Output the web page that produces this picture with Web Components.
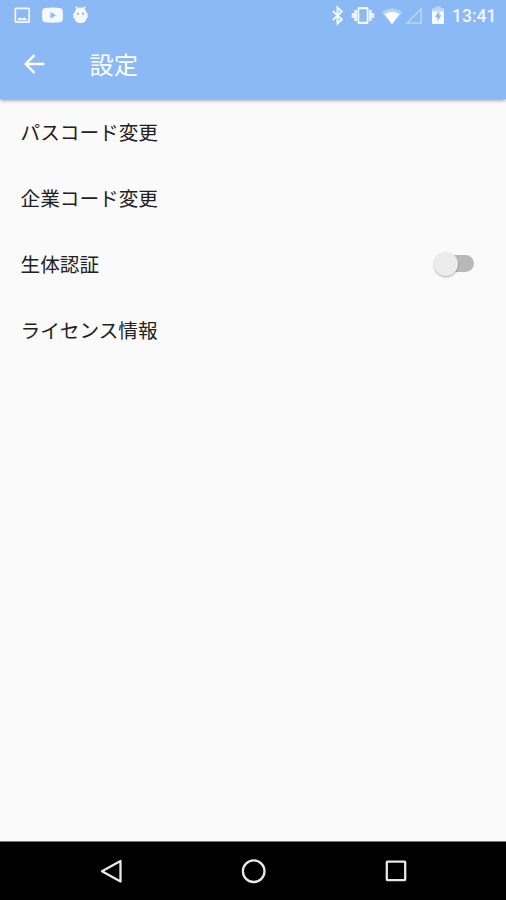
<!DOCTYPE html>
<html lang="ja">
<head>
<meta charset="utf-8">
<meta name="viewport" content="width=device-width, initial-scale=1">
<title>設定</title>
<style>
  html, body {
    margin: 0;
    height: 100%;
    overflow: hidden;
    background: #fafafa;
    font-family: Roboto, "Noto Sans CJK JP", sans-serif;
  }
</style>
</head>
<body>
<settings-screen></settings-screen>
<script>
class StatusBar extends HTMLElement {
  constructor() {
    super();
    this.attachShadow({ mode: "open" }).innerHTML = `
    <style>
      :host {
        display: flex;
        align-items: center;
        box-sizing: border-box;
        height: 32px;
        padding: 0 10px 0 13px;
        color: #fff;
      }
      svg {
        display: block;
        flex: none;
        fill: currentColor;
      }
      .left, .right {
        display: flex;
        align-items: center;
      }
      .left { gap: 9.5px; opacity: .92; }
      .right { margin-left: auto; }
      time {
        margin-left: 7px;
        width: 44px;
        font-size: 17.5px;
        font-weight: 500;
        line-height: 32px;
        white-space: nowrap;
        opacity: .88;
      }
    </style>
    <div class="left">
      <svg width="19" height="32" viewBox="0 0 19 32">
        <path fill-rule="evenodd" d="M3 7.500h12.500a1.500 1.500 0 0 1 1.500 1.500v12.500a1.500 1.500 0 0 1-1.500 1.500h-12.500a1.500 1.500 0 0 1-1.500-1.500v-12.500a1.500 1.500 0 0 1 1.500-1.500zM3.200 9.200v12.100h12.100v-12.100zM4 20.300l2.800-3.300 2 1.800 2.700-1.600 3.300 3.100z"/>
      </svg>
      <svg width="21" height="32" viewBox="0 0 21 32">
        <path fill-rule="evenodd" d="M3.500 8Q10.500 7.200 17.500 8Q20.500 8 20.700 11Q21.100 15.200 20.700 19.500Q20.500 22 17.500 22.300Q10.500 23 3.500 22.300Q.5 22 .3 19.500Q-.1 15.200 .3 11Q.5 8 3.500 8zM8.500 12v6.600l5.500-3.300z"/>
      </svg>
      <svg width="17" height="32" viewBox="0 0 17 32">
        <path fill-rule="evenodd" d="M3.200 6.900l1.200-.7 1.400 1.600q2.700-.8 5.400 0l1.400-1.600 1.200.7-1.300 2q2 1.400 2 4.100h1.200v5h-1.200q-.2 5-6 5t-6-5h-1.200v-5h1.200q0-2.700 2-4.100zM5 12.800v2h2v-2zM10 12.800v2h2v-2z"/>
      </svg>
    </div>
    <div class="right">
      <svg width="14" height="32" viewBox="0 0 14 32">
        <path d="M1.800 11l9 8.500-4.300 4V7.500l4.300 4-9 8.500" fill="none" stroke="#fff" stroke-width="1.900" opacity=".92"/>
      </svg>
      <svg width="24" height="32" viewBox="0 0 24 32" style="margin-left:6px">
        <path fill-rule="evenodd" d="M8 7h8q1.500 0 1.500 1.500v14q0 1.500-1.500 1.500h-8q-1.500 0-1.500-1.500v-14q0-1.500 1.500-1.500zM8.300 9.200v12.600h7.400v-12.600z" opacity=".9"/>
        <path d="M3.300 10h2.700v11h-2.700zM.8 13h2.500v5h-2.500zM18 10h2.700v11h-2.700zM20.700 13h2.500v5h-2.500z" opacity=".82"/>
      </svg>
      <svg width="22" height="32" viewBox="0 0 22 32" style="margin-left:6px">
        <path d="M.8 12Q11 4.500 21.200 12L11 24.200z" opacity=".35"/>
        <path d="M3.500 14.300Q11 9 18.500 14.300L11 24.200z"/>
      </svg>
      <svg width="18" height="32" viewBox="0 0 18 32" style="margin-left:2px">
        <path d="M1.800 23.200L16.200 8.800V23.200z" fill="none" stroke="#fff" stroke-width="1.300" opacity=".45"/>
      </svg>
      <svg width="14" height="32" viewBox="0 0 14 32" style="margin-left:8px">
        <path d="M4.500 6.500h5v1.700h2.500q1 0 1 1V12H1V9.200q0-1 1-1h2.500z" opacity=".45"/>
        <path fill-rule="evenodd" d="M1 11.500h12v11.500q0 1-1 1h-10q-1 0-1-1zM8.300 10.500L4 17h2.500v4.500L10.300 15.200h-2z" opacity=".92"/>
      </svg>
      <time>13:41</time>
    </div>
    `;
  }
}
customElements.define("status-bar", StatusBar);

class AppBar extends HTMLElement {
  constructor() {
    super();
    this.attachShadow({ mode: "open" }).innerHTML = `
    <style>
      :host {
        display: flex;
        align-items: center;
        box-sizing: border-box;
        height: 67px;
        padding: 0 22px 0 23px;
        color: #fff;
      }
      svg { display: block; margin-top: -3px; }
      h1 {
        margin: 1px 0 0 43.5px;
        font-size: 24.3px;
        font-weight: 400;
        line-height: 36px;
      }
    </style>
    <svg width="23" height="22" viewBox="0 0 23 22">
      <path d="M21.400 11H3.500M11.500 2.200L2.700 11l8.800 8.800" fill="none" stroke="#fff" stroke-width="2.400"/>
    </svg>
    <h1><slot></slot></h1>
    `;
  }
}
customElements.define("app-bar", AppBar);

class SettingsItem extends HTMLElement {
  constructor() {
    super();
    this.attachShadow({ mode: "open" }).innerHTML = `
    <style>
      :host {
        display: flex;
        align-items: center;
        justify-content: space-between;
        box-sizing: border-box;
        height: 66px;
        padding: 0 32px 0 20.5px;
        color: #212121;
        font-size: 19.65px;
        line-height: 30px;
      }
      span { padding-top: 4px; }
    </style>
    <span><slot></slot></span>
    <slot name="action"></slot>
    `;
  }
}
customElements.define("settings-item", SettingsItem);

class ToggleSwitch extends HTMLElement {
  constructor() {
    super();
    this.attachShadow({ mode: "open" }).innerHTML = `
    <style>
      :host {
        display: flex;
        align-items: center;
        width: 38px;
        height: 17px;
        margin-top: -1px;
        border-radius: 9px;
        background: #b9b9b9;
      }
      .thumb {
        flex: none;
        width: 24px;
        height: 24px;
        margin-left: -2.5px;
        border-radius: 50%;
        background: #ececec;
        box-shadow: 0 1px 2px rgba(0, 0, 0, .3);
      }
    </style>
    <div class="thumb"></div>
    `;
  }
}
customElements.define("toggle-switch", ToggleSwitch);

class NavigationBar extends HTMLElement {
  constructor() {
    super();
    this.attachShadow({ mode: "open" }).innerHTML = `
    <style>
      :host {
        display: flex;
        align-items: center;
        justify-content: center;
        gap: 114px;
        box-sizing: border-box;
        height: 59px;
        border-top: 1px solid #777;
        background: #000;
      }
      svg {
        display: block;
        fill: none;
        stroke: #e8e8e8;
        stroke-width: 2.3;
      }
    </style>
    <svg width="28" height="28" viewBox="0 0 28 28"><path d="M23.500 4v20.500L5 14.200z" stroke-linejoin="round"/></svg>
    <svg width="28" height="28" viewBox="0 0 28 28"><circle cx="14.700" cy="14.200" r="10.800"/></svg>
    <svg width="28" height="28" viewBox="0 0 28 28"><rect x="5.800" y="4.700" width="18.400" height="18.400" rx=".5"/></svg>
    `;
  }
}
customElements.define("navigation-bar", NavigationBar);

class SettingsScreen extends HTMLElement {
  constructor() {
    super();
    this.attachShadow({ mode: "open" }).innerHTML = `
    <style>
      :host {
        display: flex;
        flex-direction: column;
        height: 100vh;
        background: #fafafa;
      }
      header {
        flex: none;
        background: #8bb9f5;
        box-shadow: 0 1px 4px rgba(0, 0, 0, .45);
      }
      main { flex: 1; }
    </style>
    <header>
      <status-bar></status-bar>
      <app-bar>設定</app-bar>
    </header>
    <main>
      <settings-item>パスコード変更</settings-item>
      <settings-item>企業コード変更</settings-item>
      <settings-item>生体認証<toggle-switch slot="action"></toggle-switch></settings-item>
      <settings-item>ライセンス情報</settings-item>
    </main>
    <navigation-bar></navigation-bar>
    `;
  }
}
customElements.define("settings-screen", SettingsScreen);
</script>
</body>
</html>
